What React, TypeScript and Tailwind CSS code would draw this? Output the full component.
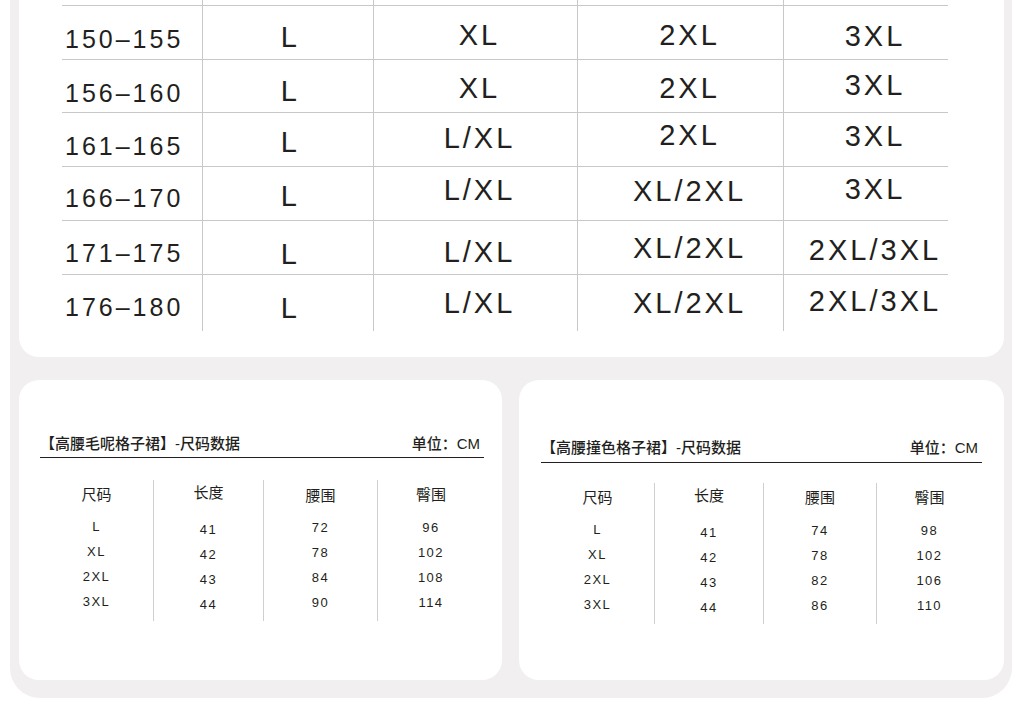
import React from "react";

type Cell = { t: string; c: string };

const colBase = [
  "justify-start pl-[3px] text-[25px] tracking-[3px]",
  "justify-center border-l border-[#c8c8c8] text-[29px] tracking-[2.5px]",
  "justify-center border-l border-[#c8c8c8] text-[29px] tracking-[3px]",
  "justify-center border-l border-[#c8c8c8] text-[29px] tracking-[3px]",
  "justify-center border-l border-[#c8c8c8] text-[29px] tracking-[3px]",
];

// horizontal nudge per column, vertical nudge per cell
const colShift = ["", "pl-[4px]", "pl-[8px]", "pl-[18px]", "pl-[18px]"];

const sizeRows: { h: string; cells: Cell[] }[] = [
  {
    h: "h-[54px]",
    cells: [
      { t: "150–155", c: "pt-[14px]" },
      { t: "L", c: "pt-[10px]" },
      { t: "XL", c: "pt-[6px]" },
      { t: "2XL", c: "pt-[6px]" },
      { t: "3XL", c: "pt-[8px]" },
    ],
  },
  {
    h: "h-[53px]",
    cells: [
      { t: "156–160", c: "pt-[14px]" },
      { t: "L", c: "pt-[10px]" },
      { t: "XL", c: "pt-[5px]" },
      { t: "2XL", c: "pt-[5px]" },
      { t: "3XL", c: "pb-[1px]" },
    ],
  },
  {
    h: "h-[54px]",
    cells: [
      { t: "161–165", c: "pt-[14px]" },
      { t: "L", c: "pt-[5px]" },
      { t: "L/XL", c: "pb-[2px]" },
      { t: "2XL", c: "pb-[8px]" },
      { t: "3XL", c: "pb-[6px]" },
    ],
  },
  {
    h: "h-[54px]",
    cells: [
      { t: "166–170", c: "pt-[9px]" },
      { t: "L", c: "pt-[6px]" },
      { t: "L/XL", c: "pb-[6px]" },
      { t: "XL/2XL", c: "pb-[4px]" },
      { t: "3XL", c: "pb-[8px]" },
    ],
  },
  {
    h: "h-[54px]",
    cells: [
      { t: "171–175", c: "pt-[11px]" },
      { t: "L", c: "pt-[14px]" },
      { t: "L/XL", c: "pt-[10px]" },
      { t: "XL/2XL", c: "pt-[2px]" },
      { t: "2XL/3XL", c: "pt-[6px]" },
    ],
  },
  {
    h: "h-[57px]",
    cells: [
      { t: "176–180", c: "pt-[9px]" },
      { t: "L", c: "pt-[10px]" },
      { t: "L/XL", c: "pt-[1px]" },
      { t: "XL/2XL", c: "" },
      { t: "2XL/3XL", c: "pb-[4px]" },
    ],
  },
];

const gridCols = "grid grid-cols-[140px_171px_204px_206px_165px]";

type Col = { head: string; headCls: string; dataCls: string; vals: string[] };

const SizeCard = ({
  title,
  cardCls,
  titleCls,
  tableCls,
  cols,
}: {
  title: string;
  cardCls: string;
  titleCls: string;
  tableCls: string;
  cols: Col[];
}) => {
  return (
    <div className={`h-[300px] rounded-[20px] bg-white ${cardCls}`}>
      <div
        className={`flex items-center justify-between border-b border-[#231f20] text-[15px] leading-[20px] font-medium ${titleCls}`}
      >
        <span>{title}</span>
        <span className="pr-[4px]">单位：CM</span>
      </div>
      <div className={`grid ${tableCls}`}>
        {cols.map((col, i) => (
          <div
            key={col.head}
            className={`flex h-[141px] flex-col items-center ${i > 0 ? "border-l border-[#cfcfcf]" : ""}`}
          >
            <div className={`flex h-[30px] items-center text-[15px] ${col.headCls}`}>{col.head}</div>
            <div className={`flex flex-col items-center ${col.dataCls}`}>
              {col.vals.map((v, j) => (
                <div
                  key={j}
                  className="h-[25px] font-['Liberation_Sans',sans-serif] text-[13px] leading-[25px] tracking-[1.5px]"
                >
                  {v}
                </div>
              ))}
            </div>
          </div>
        ))}
      </div>
    </div>
  );
};

const App = () => {
  return (
    <div className="h-[719px] w-[1022px] overflow-hidden bg-white pl-[10px] font-['Liberation_Sans','Noto_Sans_CJK_SC',sans-serif] text-[#231f20]">
      <div className="w-[1002px] rounded-b-[30px] bg-[#f1efef] pr-[8px] pb-[18px] pl-[9px]">
        {/* size by height table */}
        <div className="h-[357px] rounded-b-[20px] bg-white pl-[43px]">
          <div className={`${gridCols} h-[5px] w-[886px]`}>
            {colBase.map((c, i) => (
              <div key={i} className={c} />
            ))}
          </div>
          {sizeRows.map((row, r) => (
            <div key={r} className={`${gridCols} ${row.h} w-[886px] border-t border-[#c8c8c8]`}>
              {row.cells.map((cell, i) => (
                <div key={i} className={`flex items-center leading-none ${colBase[i]} ${colShift[i]} ${cell.c}`}>
                  {cell.t}
                </div>
              ))}
            </div>
          ))}
        </div>

        <div className="mt-[23px] flex gap-[17px]">
          <SizeCard
            title="【高腰毛呢格子裙】-尺码数据"
            cardCls="w-[483px] pt-[54px] pr-[18px] pl-[21px]"
            titleCls="pb-[3px]"
            tableCls="mt-[22px] grid-cols-[113px_110px_114px_107px]"
            cols={[
              { head: "尺码", headCls: "", dataCls: "mt-[4px]", vals: ["L", "XL", "2XL", "3XL"] },
              { head: "长度", headCls: "pb-[3px]", dataCls: "mt-[7px]", vals: ["41", "42", "43", "44"] },
              { head: "腰围", headCls: "pt-[2px]", dataCls: "mt-[5px]", vals: ["72", "78", "84", "90"] },
              { head: "臀围", headCls: "", dataCls: "mt-[5px]", vals: ["96", "102", "108", "114"] },
            ]}
          />
          <SizeCard
            title="【高腰撞色格子裙】-尺码数据"
            cardCls="w-[485px] pt-[58px] pr-[22px] pl-[22px]"
            titleCls="pb-[4px]"
            tableCls="mt-[20px] grid-cols-[113px_109px_113px_106px]"
            cols={[
              { head: "尺码", headCls: "", dataCls: "mt-[4px]", vals: ["L", "XL", "2XL", "3XL"] },
              { head: "长度", headCls: "pb-[3px]", dataCls: "mt-[7px]", vals: ["41", "42", "43", "44"] },
              { head: "腰围", headCls: "", dataCls: "mt-[5px]", vals: ["74", "78", "82", "86"] },
              { head: "臀围", headCls: "", dataCls: "mt-[5px]", vals: ["98", "102", "106", "110"] },
            ]}
          />
        </div>
      </div>
    </div>
  );
};

export default App;
